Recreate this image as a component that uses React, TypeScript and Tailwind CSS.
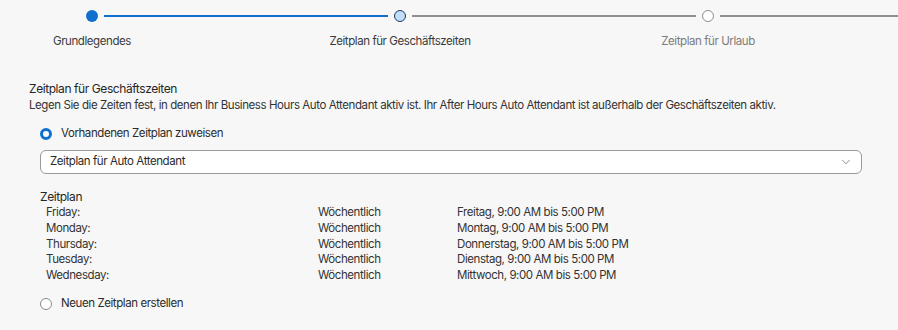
import { ChevronDown } from "lucide-react";

const rows = [
  { day: "Friday:", freq: "Wöchentlich", time: "Freitag, 9:00 AM bis 5:00 PM" },
  { day: "Monday:", freq: "Wöchentlich", time: "Montag, 9:00 AM bis 5:00 PM" },
  { day: "Thursday:", freq: "Wöchentlich", time: "Donnerstag, 9:00 AM bis 5:00 PM" },
  { day: "Tuesday:", freq: "Wöchentlich", time: "Dienstag, 9:00 AM bis 5:00 PM" },
  { day: "Wednesday:", freq: "Wöchentlich", time: "Mittwoch, 9:00 AM bis 5:00 PM" },
];

function Radio({ checked, label }: { checked: boolean; label: string }) {
  return (
    <label className="flex items-center h-4 gap-[9px] cursor-pointer">
      {checked ? (
        <span className="w-3 h-3 rounded-full border-[3px] border-[#1170cf] bg-white box-border" />
      ) : (
        <span className="w-3 h-3 rounded-full border border-[#8a8a8a] bg-white box-border" />
      )}
      <span className="text-[#2b2b2b]">{label}</span>
    </label>
  );
}

export default function App() {
  return (
    <div
      className="w-[898px] h-[330px] bg-[#f7f7f7] overflow-hidden text-[11.5px] tracking-[-0.42px]"
      style={{ fontFamily: "Inter, 'Noto Sans', sans-serif" }}
    >
      {/* STEPPER */}
      <div className="pt-[10px]">
        <div className="flex items-center pl-[86px]">
          <span className="w-3 h-3 rounded-full bg-[#1170cf] shrink-0" />
          <span className="w-[284px] h-[2px] bg-[#1170cf] mx-[6px] shrink-0" />
          <span className="w-3 h-3 rounded-full bg-[#c3defa] border border-[#1d3b5e] box-border shrink-0" />
          <span className="w-[284px] h-[2px] bg-[#8f8f8f] mx-[6px] shrink-0" />
          <span className="w-3 h-3 rounded-full bg-white border border-[#8f8f8f] box-border shrink-0" />
          <span className="flex-1 h-[2px] bg-[#8f8f8f] ml-[6px]" />
        </div>
        <div className="flex mt-[11px] pl-[12px] gap-[148px] leading-4">
          <span className="w-[160px] text-center text-[#3b3b3b] shrink-0">Grundlegendes</span>
          <span className="w-[160px] text-center text-[#3b3b3b] shrink-0">Zeitplan für Geschäftszeiten</span>
          <span className="w-[160px] text-center text-[#7c7c7c] shrink-0">Zeitplan für Urlaub</span>
        </div>
      </div>

      {/* BUSINESS HOURS */}
      <section className="mt-[32px] pl-[29px]">
        <h2 className="text-[12px] leading-4 text-[#262626]">Zeitplan für Geschäftszeiten</h2>
        <p className="leading-4 text-[#333333]">
          Legen Sie die Zeiten fest, in denen Ihr Business Hours Auto Attendant aktiv ist. Ihr After Hours Auto Attendant ist außerhalb der Geschäftszeiten aktiv.
        </p>

        <div className="ml-[11px]">
          <div className="mt-[13px]">
            <Radio checked label="Vorhandenen Zeitplan zuweisen" />
          </div>

          <button className="mt-[8px] w-[822px] h-[24px] flex items-center justify-between pl-[9px] pr-[8px] bg-white border border-[#9a9a9a] rounded-[6px] tracking-[-0.42px] text-[#2b2b2b]">
            <span>Zeitplan für Auto Attendant</span>
            <ChevronDown className="w-3.5 h-3.5 text-[#666666]" strokeWidth={1.25} />
          </button>

          <h3 className="mt-[15px] text-[12px] leading-4 text-[#262626]">Zeitplan</h3>
          <div className="pl-[6px] leading-[15.75px] text-[#333333]">
            {rows.map((r) => (
              <div key={r.day} className="grid grid-cols-[272px_139px_1fr]">
                <span>{r.day}</span>
                <span>{r.freq}</span>
                <span>{r.time}</span>
              </div>
            ))}
          </div>

          <div className="mt-[12px]">
            <Radio checked={false} label="Neuen Zeitplan erstellen" />
          </div>
        </div>
      </section>
    </div>
  );
}
